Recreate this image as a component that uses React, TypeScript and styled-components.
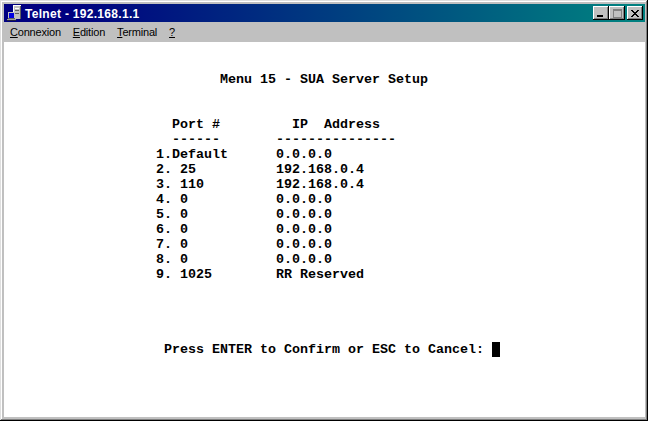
import * as React from 'react';
import styled, { createGlobalStyle } from 'styled-components';

const GlobalStyle = createGlobalStyle`
  html, body {
    margin: 0;
    padding: 0;
    background: #c0c0c0;
  }
`;

const screenRows = [
  '',
  '',
  '                           Menu 15 - SUA Server Setup',
  '',
  '',
  '                     Port #         IP  Address',
  '                     ------       ---------------',
  '                   1.Default      0.0.0.0',
  '                   2. 25          192.168.0.4',
  '                   3. 110         192.168.0.4',
  '                   4. 0           0.0.0.0',
  '                   5. 0           0.0.0.0',
  '                   6. 0           0.0.0.0',
  '                   7. 0           0.0.0.0',
  '                   8. 0           0.0.0.0',
  '                   9. 1025        RR Reserved',
  '',
  '',
  '',
  '',
];

const menus = [
  { key: 'C', rest: 'onnexion' },
  { key: 'E', rest: 'dition' },
  { key: 'T', rest: 'erminal' },
  { key: '?', rest: '' },
];

const TelnetIcon = () => (
  <svg width="16" height="16" viewBox="0 0 16 16" shapeRendering="crispEdges">
    {/* tower */}
    <path d="M7 0h8v14H7z" fill="#c0c0c0" />
    <path d="M7 0h8v1H7zM7 0h1v7H7zM9 3h4v1H9z" fill="#fff" />
    <path d="M14 1h1v13h-1zM9 5h4v1H9zM9 8h4v1H9z" fill="#606060" />
    {/* monitor */}
    <path d="M2 7h7v7H2z" fill="#c0c0c0" />
    <path d="M3 8h5v5H3z" fill="#0000e0" />
    <path d="M2 13h7v1H2z" fill="#606060" />
    {/* keyboard */}
    <path d="M1 14h9v1H1z" fill="#a0a0a0" />
    <path d="M1 15h9v1H1z" fill="#202040" />
  </svg>
);

const MinimizeIcon = () => (
  <svg width="8" height="7" viewBox="0 0 8 7" shapeRendering="crispEdges">
    <path d="M0 5h6v2H0z" fill="#000" />
  </svg>
);

const MaximizeIcon = () => (
  <svg width="9" height="9" viewBox="0 0 9 9" shapeRendering="crispEdges">
    <path d="M0 0h9v2H0zM0 2h1v7H0zM8 2h1v7H8zM0 8h9v1H0z" fill="#808080" />
  </svg>
);

const CloseIcon = () => (
  <svg width="8" height="7" viewBox="0 0 8 7" shapeRendering="crispEdges">
    <path d="M0 0h2v1h1v1h2V1h1V0h2v1H7v1H6v1H5v1h1v1h1v1h1v1H6V6H5V5H3v1H2v1H0V6h1V5h1V4h1V3H2V2H1V1H0z" fill="#000" />
  </svg>
);

export default function App() {
  return (
    <>
      <GlobalStyle />
      <Window>
        <TitleBar>
          <TitleIcon>
            <TelnetIcon />
          </TitleIcon>
          <TitleText>Telnet - 192.168.1.1</TitleText>
          <Controls>
            <CaptionButton>
              <MinimizeIcon />
            </CaptionButton>
            <CaptionButton>
              <MaximizeIcon />
            </CaptionButton>
            <CloseButton>
              <CloseIcon />
            </CloseButton>
          </Controls>
        </TitleBar>
        <MenuBar>
          {menus.map((m) => (
            <MenuItem key={m.key}>
              <u>{m.key}</u>
              {m.rest}
            </MenuItem>
          ))}
        </MenuBar>
        <Screen>
          {screenRows.map((row, i) => (
            <Row key={i}>{row}</Row>
          ))}
          <Row>
            {'                    Press ENTER to Confirm or ESC to Cancel: '}
            <Cursor />
          </Row>
        </Screen>
      </Window>
    </>
  );
}

const Window = styled.div`
  box-sizing: border-box;
  display: flex;
  flex-direction: column;
  width: 648px;
  height: 421px;
  padding: 4px 3px 4px 4px;
  background: #c0c0c0;
  box-shadow: inset -1px -1px 0 #000, inset 1px 1px 0 #dfdfdf, inset -2px -2px 0 #808080, inset 2px 2px 0 #fff;
  overflow: hidden;
`;

const TitleBar = styled.div`
  display: flex;
  align-items: center;
  flex: 0 0 18px;
  padding: 0 2px;
  background: linear-gradient(90deg, #000080 0%, #000080 10%, #008080 97%, #008080 100%);
`;

const TitleIcon = styled.div`
  display: flex;
  flex: 0 0 16px;
  margin-right: 3px;
`;

const TitleText = styled.div`
  flex: 1;
  padding-top: 1px;
  font: bold 12px "Liberation Sans", Arial, sans-serif;
  letter-spacing: 0.3px;
  color: #fff;
  white-space: pre;
`;

const Controls = styled.div`
  display: flex;
  align-items: center;
`;

const CaptionButton = styled.div`
  box-sizing: border-box;
  display: flex;
  align-items: center;
  justify-content: center;
  width: 16px;
  height: 14px;
  background: #c0c0c0;
  box-shadow: inset -1px -1px 0 #000, inset 1px 1px 0 #fff, inset -2px -2px 0 #808080;
`;

const CloseButton = styled(CaptionButton)`
  margin-left: 2px;
`;

const MenuBar = styled.div`
  display: flex;
  align-items: center;
  flex: 0 0 20px;
  font: 11px "Liberation Sans", Arial, sans-serif;
  letter-spacing: -0.2px;
  color: #000;
`;

const MenuItem = styled.div`
  padding: 0 6px;
  white-space: pre;
`;

const Screen = styled.div`
  flex: 1;
  background: #fff;
  font: bold 13.33px/15px "Liberation Mono", "Courier New", monospace;
  color: #000;
`;

const Row = styled.div`
  height: 15px;
  white-space: pre;
`;

const Cursor = styled.span`
  display: inline-block;
  width: 8px;
  height: 15px;
  background: #000;
  vertical-align: top;
`;
